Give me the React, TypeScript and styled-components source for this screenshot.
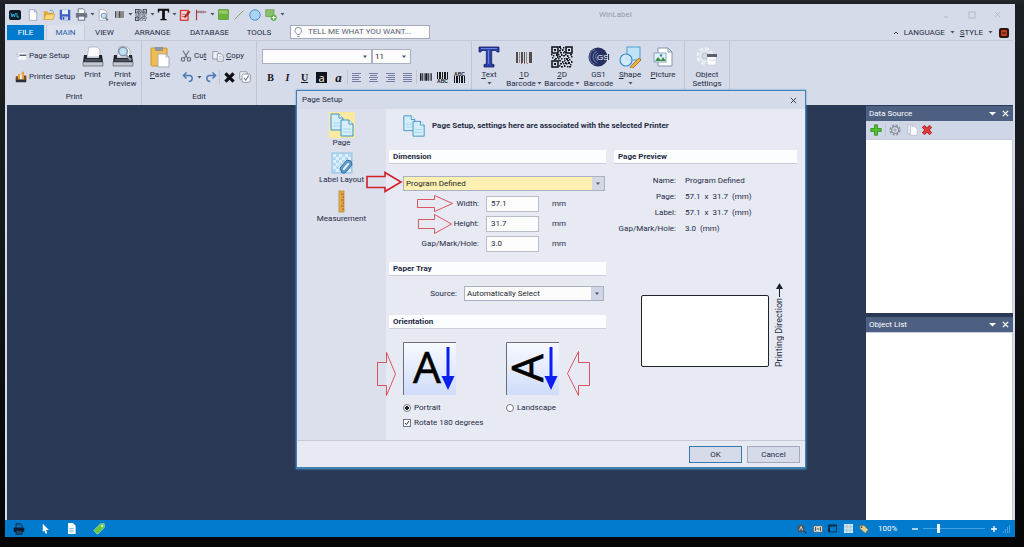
import React from "react";
import styled, { createGlobalStyle, css } from "styled-components";

const GlobalStyle = createGlobalStyle`
  *, *::before, *::after { box-sizing: border-box; }
  body { margin: 0; background: #0d0f12; }
  button, input, select { font: inherit; color: inherit; margin: 0; }
`;

const uiFont = 'Roboto, "Open Sans", sans-serif';
const displayFont = '"Open Sans", "Noto Sans", sans-serif';

/* ---------- window frame ---------- */

const Desktop = styled.div`
  min-height: 100vh;
  display: flex;
  padding: 4px 9px 10px 5px;
  background: linear-gradient(180deg, #24262c 0, #1c1f23 6px, #15191c 40%, #0b0b0c 75%, #050505 100%);
  font-family: ${uiFont};
  font-size: 8px;
  line-height: 10px;
  color: #1f2b45;
`;

const AppWindow = styled.div`
  position: relative;
  flex: 1;
  display: flex;
  flex-direction: column;
  min-width: 0;
  background: #d6dbe9;
`;

const TitleBar = styled.header`
  display: flex;
  align-items: center;
  height: 21px;
  padding: 0 6px 0 0;
`;

const QuickAccess = styled.div`
  display: flex;
  align-items: center;
  width: 576px;
`;

const AppTitle = styled.div`
  flex: 1;
  padding-left: 18px;
  color: #949aab;
`;

const WindowControls = styled.div`
  display: flex;
  color: #b3b8c6;
`;

const IconButton = styled.button<{ $w?: number; $h?: number; $on?: boolean }>`
  display: flex;
  align-items: center;
  justify-content: center;
  flex: none;
  width: ${(p) => p.$w ?? 16}px;
  height: ${(p) => p.$h ?? 16}px;
  padding: 0;
  border: 0;
  background: none;
`;

/* ---------- ribbon tabs ---------- */

const TabBar = styled.nav`
  display: flex;
  align-items: stretch;
  height: 15px;
  padding: 0 5px 0 2px;
`;

const Tab = styled.button<{ $w: number; $kind?: "file" | "active" }>`
  width: ${(p) => p.$w}px;
  padding: 0 0 1px;
  border: 1px solid transparent;
  border-width: 0 1px;
  background: none;
  line-height: 13px;
  ${(p) => p.$kind === "file" && css`
    background: #007acc;
    color: #fff;
    border-color: #007acc;
    margin-right: 2px;
  `}
  ${(p) => p.$kind === "active" && css`
    background: #dce1ee;
    color: #2a5fa5;
    border-color: #c4cbdd;
  `}
`;

const SearchBox = styled.label`
  display: flex;
  align-items: center;
  gap: 5px;
  width: 140px;
  height: 14px;
  margin-left: 10px;
  padding-left: 3px;
  border: 1px solid #a3a9b8;
  background: #fcfcfd;
  input {
    flex: 1;
    min-width: 0;
    padding: 0;
    border: 0;
    outline: 0;
    background: none;
  }
  input::placeholder { color: #5b6170; opacity: 1; }
`;

const TabBarEnd = styled.div`
  display: flex;
  align-items: center;
  gap: 5px;
  margin-left: auto;
`;

const MenuButton = styled.button`
  display: flex;
  align-items: center;
  gap: 5px;
  padding: 0;
  border: 0;
  background: none;
`;

/* ---------- ribbon ---------- */

const Ribbon = styled.section`
  display: flex;
  height: 65px;
  margin: 0 2px;
  border-top: 1px solid #c3c9da;
`;

const Group = styled.div<{ $w: number }>`
  display: flex;
  flex-direction: column;
  justify-content: space-between;
  width: ${(p) => p.$w}px;
  padding: 5px 0 3px;
  border-right: 1px solid #c0c6d8;
`;

const GroupRow = styled.div`
  display: flex;
`;

const GroupLabel = styled.div`
  text-align: center;
`;

const Stack = styled.div<{ $w: number; $pad?: number }>`
  display: flex;
  flex-direction: column;
  gap: 5px;
  width: ${(p) => p.$w}px;
  padding-left: ${(p) => p.$pad ?? 0}px;
  padding-top: 2px;
`;

const StackRow = styled.div`
  display: flex;
  align-items: center;
  height: 16px;
`;

const SmallButton = styled.button<{ $w?: number }>`
  display: flex;
  align-items: center;
  gap: 2px;
  width: ${(p) => (p.$w ? p.$w + "px" : "auto")};
  height: 16px;
  padding: 0;
  border: 0;
  background: none;
  white-space: nowrap;
`;

const BigButton = styled.button<{ $w: number }>`
  display: flex;
  flex-direction: column;
  align-items: center;
  width: ${(p) => p.$w}px;
  padding: 0;
  border: 0;
  background: none;
  line-height: 9px;
  white-space: nowrap;
  svg { flex: none; }
`;

const BigLabel = styled.span`
  display: flex;
  align-items: center;
  gap: 1px;
  margin-top: 2px;
  & + & { margin-top: 0; }
`;

const BigCaret = styled.span`
  display: flex;
  height: 9px;
  align-items: center;
`;

const Divider = styled.span`
  flex: none;
  width: 1px;
  height: 14px;
  background: #c0c6d8;
`;

const SelectFrame = styled.span<{ $w: number; $tone?: "ribbon" | "gold" | "plain" }>`
  display: flex;
  position: relative;
  width: ${(p) => p.$w}px;
  height: 15px;
  border: 1px solid #a9b0c4;
  background: ${(p) => (p.$tone === "gold" ? "#fdf0b0" : "#fcfcfd")};
  select {
    flex: 1;
    min-width: 0;
    appearance: none;
    padding: 0 14px 0 2px;
    border: 0;
    outline: 0;
    background: none;
    line-height: 13px;
    color: #1a1f2c;
  }
  svg {
    position: absolute;
    right: 0;
    top: 0;
    width: 12px;
    height: 13px;
    pointer-events: none;
    background: ${(p) => (p.$tone === "plain" ? "#cfd5e4" : p.$tone === "gold" ? "#d3d8e3" : "none")};
  }
`;

/* ---------- workspace and side panes ---------- */

const Workspace = styled.main`
  flex: 1;
  display: flex;
  justify-content: flex-end;
  margin: 0 2px;
  padding-top: 1px;
  background: #293955;
`;

const PaneColumn = styled.aside`
  display: flex;
  flex-direction: column;
  gap: 4px;
  width: 147px;
`;

const Pane = styled.section<{ $grow: number }>`
  flex: ${(p) => p.$grow} 1 0;
  display: flex;
  flex-direction: column;
`;

const PaneHeader = styled.header`
  display: flex;
  align-items: center;
  height: 15px;
  padding: 0 2px 0 3px;
  background: #4d6082;
  color: #fff;
  span { flex: 1; }
`;

const PaneTools = styled.div`
  display: flex;
  align-items: center;
  height: 18px;
  background: #cfd6e5;
`;

const PaneBody = styled.div`
  flex: 1;
  border: 1px solid #c8cddb;
  border-width: 1px 1px 0 0;
  background: #fff;
`;

/* ---------- status bar ---------- */

const StatusBar = styled.footer`
  display: flex;
  align-items: center;
  height: 17px;
  padding: 0 4px 0 0;
  background: #007acc;
  color: #fff;
`;

const StatusEnd = styled.div`
  display: flex;
  align-items: center;
  margin-left: auto;
`;

const ZoomValue = styled.span`
  width: 36px;
  padding-left: 7px;
`;

const ZoomSlider = styled.input`
  appearance: none;
  width: 62px;
  height: 10px;
  background: linear-gradient(#4aa3e0, #4aa3e0) center / 100% 1px no-repeat;
  &::-webkit-slider-thumb {
    appearance: none;
    width: 3px;
    height: 9px;
    background: #eaf2fa;
  }
`;

/* ---------- dialog ---------- */

const Dialog = styled.div`
  position: absolute;
  left: 291px;
  top: 86px;
  width: 510px;
  border: 1px solid #3f80b4;
  border-width: 1px 1px 2px;
  background: #e7e9f3;
  box-shadow: 0 0 2px #5b9bcd;
`;

const DialogTitle = styled.header`
  display: flex;
  align-items: center;
  justify-content: space-between;
  height: 18px;
  padding: 0 4px 0 5px;
  background: #d6dbe9;
`;

const DialogMain = styled.div`
  display: flex;
  height: 332px;
  border-bottom: 1px solid #c6cad6;
`;

const Sidebar = styled.nav`
  flex: none;
  display: flex;
  flex-direction: column;
  align-items: center;
  width: 89px;
  padding-top: 3px;
  background: #dce0ec;
`;

const SideItem = styled.button<{ $on?: boolean }>`
  display: flex;
  flex-direction: column;
  align-items: center;
  width: 100%;
  height: 39px;
  padding: 0;
  border: 0;
  background: none;
  svg { background: ${(p) => (p.$on ? "#faeaa0" : "none")}; }
`;

const Content = styled.div`
  flex: 1;
  display: flex;
  flex-direction: column;
  padding: 4px 8px 0 3px;
`;

const Heading = styled.h1`
  display: flex;
  align-items: center;
  gap: 6px;
  height: 37px;
  margin: 0;
  padding: 0 0 11px 13px;
  font-size: 8px;
  font-weight: 700;
`;

const Columns = styled.div`
  display: grid;
  grid-template-columns: 217px 1fr;
  gap: 8px;
`;

const Section = styled.section`
  display: flex;
  flex-direction: column;
`;

const SectionTitle = styled.h2`
  height: 14px;
  margin: 0;
  padding-left: 4px;
  border-bottom: 1px solid #c9cdd9;
  background: #fcfdfe;
  font-size: 8px;
  line-height: 14px;
  font-weight: 700;
`;

const Fields = styled.div<{ $h: number; $top?: number }>`
  display: flex;
  flex-direction: column;
  height: ${(p) => p.$h}px;
  padding: ${(p) => p.$top ?? 12}px 1px 0 14px;
`;

const Field = styled.label<{ $label: number }>`
  display: grid;
  grid-template-columns: ${(p) => p.$label}px auto 1fr;
  align-items: center;
  column-gap: 7px;
  > span:first-child { text-align: right; }
`;

const FieldList = styled.div`
  display: flex;
  flex-direction: column;
  gap: 4px;
  margin-top: 5px;
`;

const NumberBox = styled.input`
  width: 53px;
  height: 16px;
  padding: 0 4px 1px;
  border: 1px solid #b7bccb;
  outline: 0;
  background: #fdfdfe;
`;

const Unit = styled.span`
  padding-left: 6px;
`;

const Orientations = styled.div`
  display: grid;
  grid-template-columns: 103px 103px;
  margin-top: 1px;
`;

const Option = styled.label`
  display: flex;
  flex-direction: column;
  gap: 8px;
  svg { overflow: visible; }
`;

const Choice = styled.span`
  display: flex;
  align-items: center;
  gap: 3px;
`;

const Radio = styled.input`
  appearance: none;
  width: 8px;
  height: 8px;
  border: 1px solid #6f7789;
  border-radius: 50%;
  background: #fff;
  &:checked { background: radial-gradient(circle, #222 0 2px, #fff 2px); }
`;

const CheckLine = styled.label`
  display: flex;
  align-items: center;
  gap: 3px;
  margin-top: 5px;
`;

const CheckBox = styled.input`
  appearance: none;
  width: 8px;
  height: 8px;
  border: 1px solid #6f7789;
  background: #fff;
  &:checked {
    background: #fff url("data:image/svg+xml,%3Csvg xmlns='http://www.w3.org/2000/svg' viewBox='0 0 6 6'%3E%3Cpath d='M1 3l1.5 1.7L5 1' fill='none' stroke='%23333'/%3E%3C/svg%3E");
  }
`;

const Summary = styled.dl`
  display: grid;
  grid-template-columns: 62px 1fr;
  gap: 6px 9px;
  height: 119px;
  align-content: start;
  margin: 0;
  padding-top: 12px;
  dt { text-align: right; }
  dd { margin: 0; white-space: pre; }
`;

const PreviewRow = styled.div`
  display: flex;
  align-items: flex-end;
  gap: 5px;
  padding-left: 27px;
`;

const Sheet = styled.div`
  width: 128px;
  height: 72px;
  border: 1px solid #20222a;
  border-radius: 2px;
  background: #fff;
`;

const PrintDirection = styled.div`
  display: flex;
  flex-direction: column;
  align-items: center;
  span {
    writing-mode: vertical-rl;
    transform: rotate(180deg);
    font-size: 9px;
    line-height: 11px;
  }
`;

const DialogFooter = styled.footer`
  display: flex;
  justify-content: flex-end;
  gap: 5px;
  padding: 5px 5px 4px;
`;

const PushButton = styled.button<{ $primary?: boolean }>`
  width: 53px;
  height: 17px;
  padding: 0;
  border: 1px solid ${(p) => (p.$primary ? "#3a78b0" : "#a3a9ba")};
  background: #d6dbe9;
`;

const Callouts = styled.svg`
  position: absolute;
  left: 0;
  top: 0;
  width: 100%;
  height: 100%;
  pointer-events: none;
`;

/* ---------- icons ---------- */

type IconProps = { s?: number; box?: number; children: React.ReactNode };
const Svg = ({ s = 12, box = 16, children }: IconProps) => (
  <svg width={s} height={s} viewBox={`0 0 ${box} ${box}`} fill="none" aria-hidden="true">{children}</svg>
);

const Caret = ({ c = "#4a5266" }: { c?: string }) => (
  <svg width="5" height="3" viewBox="0 0 5 3" aria-hidden="true"><path d="M.5 0h4L2.500 2.500z" fill={c} /></svg>
);

const DropArrow = () => (
  <svg viewBox="0 0 12 12" aria-hidden="true"><path d="M4 5h4L6 7.500z" fill="#4a5266" /></svg>
);

const Logo = () => (
  <Svg s={12} box={12}>
    <rect x="0" y="1" width="12" height="10" rx="2" fill="#0b1a22" />
    <path d="M2 4l1 4 1.200-3L5.500 8l1-4M8 4v4h2" stroke="#27b3e6" />
  </Svg>
);

const NewDoc = () => (
  <Svg><path d="M3 1h7l3 3v11H3z" fill="#fff" stroke="#8c9bb8" /><path d="M10 1v3h3" stroke="#8c9bb8" /></Svg>
);

const Folder = () => (
  <Svg>
    <path d="M1 3h5l1 2h7v9H1z" fill="#e0a93a" />
    <path d="M4 7h12l-3 7H1z" fill="#fbd87a" stroke="#c58d28" strokeWidth=".7" />
    <path d="M9 2c3-1 5 0 5 3" stroke="#4a84d0" />
  </Svg>
);

const Save = () => (
  <Svg>
    <path d="M1 1h14v14H3l-2-2z" fill="#3d5fc4" />
    <rect x="4" y="1" width="8" height="6" fill="#e9eefb" />
    <rect x="4" y="10" width="8" height="5" fill="#c8d2ee" />
    <rect x="5" y="11" width="2" height="3" fill="#2a3f92" />
  </Svg>
);

const Printer = ({ s = 13, dark }: { s?: number; dark?: boolean }) => (
  <Svg s={s}>
    <path d="M4 6V1h6l2 2v3" fill={dark ? "#0a6cb5" : "#fff"} stroke={dark ? "#0c1c2c" : "#555e70"} />
    <rect x="1" y="6" width="14" height="6" rx="1" fill={dark ? "#0c1c2c" : "#707888"} />
    <rect x="4" y="10" width="8" height="5" fill={dark ? "#1c4a70" : "#eef0f6"} stroke={dark ? "#0c1c2c" : "#555e70"} />
  </Svg>
);

const PreviewIcon = () => (
  <Svg>
    <path d="M3 1h7l3 3v11H3z" fill="#fff" stroke="#9aa3b6" />
    <circle cx="9" cy="9" r="3.500" fill="#cfe2f4" stroke="#5e6f8c" />
    <path d="M11.500 12l3 3" stroke="#5e6f8c" strokeWidth="2" />
  </Svg>
);

const bars = [[0, 2], [3, 1], [5, 1], [7, 3], [11, 1], [13, 1], [15, 1]];
const Bars = ({ s = 11, c = "#4c4a48", h = 12 }: { s?: number; c?: string; h?: number }) => (
  <Svg s={s}>{bars.map(([x, w]) => <rect key={x} x={x} y={(16 - h) / 2} width={w} height={h} fill={c} />)}</Svg>
);

/* Three finder squares on an 11-unit grid with scattered data cells between them. */
const qrCells = [
  [8, 0], [9, 2], [12, 1], [8, 4], [11, 3], [13, 5], [9, 6], [12, 6], [10, 8], [12, 9],
  [0, 8], [2, 9], [5, 8], [7, 8], [1, 11], [4, 12], [6, 10], [3, 13], [8, 10], [14, 8], [16, 9], [19, 8], [17, 11], [20, 10],
  [15, 12], [13, 12], [10, 12], [8, 14], [11, 15], [13, 14], [16, 14], [18, 13], [20, 15], [9, 17], [12, 17], [15, 17],
  [17, 16], [19, 18], [8, 19], [10, 20], [13, 19], [16, 20], [18, 20], [7, 12], [14, 16],
];
const QrCode = ({ s = 21, c = "#15181f" }: { s?: number; c?: string }) => (
  <svg width={s} height={s} viewBox="0 0 22 22" fill="none" aria-hidden="true">
    {[[0, 0], [14, 0], [0, 14]].map(([x, y]) => (
      <g key={x + "-" + y} transform={`translate(${x} ${y})`}>
        <rect x="1" y="1" width="6" height="6" stroke={c} strokeWidth="1.600" />
        <rect x="3" y="3" width="2" height="2" fill={c} />
      </g>
    ))}
    {qrCells.map(([x, y], i) => <rect key={i} x={x} y={y} width={i % 3 === 0 ? 2 : 1.500} height={i % 4 === 0 ? 2 : 1.500} fill={c} />)}
  </svg>
);

const BigT = ({ s = 13, c = "#111" }: { s?: number; c?: string }) => (
  <Svg s={s}>
    <path d="M1 1h14v4.500h-1.500L13 3.300H9.700v9.900l2.300.5V15H4v-1.300l2.300-.5V3.300H3L2.500 5.500H1z" fill={c} />
  </Svg>
);

const RedNote = () => (
  <Svg>
    <rect x="2" y="2" width="10" height="13" fill="#f6dada" stroke="#d83a3a" strokeWidth="1.800" />
    <path d="M4 7h5M4 10h3" stroke="#c43a3a" />
    <path d="M6 11l7-9 2.500 2-7 8z" fill="#b02222" />
  </Svg>
);

const Ruler = () => (
  <Svg><path d="M2 1v14M2 4h13" stroke="#9c3a3a" strokeWidth="1.500" /><path d="M5 2v4M8 2v4M11 2v4" stroke="#7c8499" /></Svg>
);

const GreenBox = () => (
  <Svg s={11}><rect x="1" y="1" width="14" height="14" fill="#6db33a" stroke="#4b8a24" /><rect x="2" y="2" width="12" height="5" fill="#93cc62" /></Svg>
);

const LineIcon = () => <Svg><path d="M2 14L14 2" stroke="#7ea35a" strokeWidth="1.300" /></Svg>;
const CircleIcon = () => <Svg><circle cx="8" cy="8" r="7" fill="#a9d3f5" stroke="#4a8fce" strokeWidth="1.300" /></Svg>;
const AddShape = () => (
  <Svg>
    <rect x="1" y="1" width="11" height="9" fill="#8cbf6a" stroke="#6b9a4c" />
    <circle cx="11.500" cy="11.500" r="4" fill="#4caf32" /><path d="M11.500 9v5M9 11.500h5" stroke="#fff" strokeWidth="1.500" />
  </Svg>
);

const Bulb = () => (
  <svg width="9" height="11" viewBox="0 0 9 11" fill="none" aria-hidden="true">
    <path d="M3 7.500C2.500 6 1 5.500 1 3.700a3.300 3.300 0 0 1 6.600 0C7.600 5.500 6 6 5.600 7.500z" stroke="#8a91a0" />
    <path d="M3.200 9.500h2.300" stroke="#8a91a0" />
  </svg>
);

const PageSetupIcon = () => (
  <Svg s={12}><rect x="4" y="4" width="11" height="9" fill="#f6f7fb" /><path d="M6 7h9" stroke="#4a5266" strokeWidth="1.800" /><path d="M1 5l4 1M3 9l3-1" stroke="#aab0c0" /></Svg>
);

const PrinterSetupIcon = () => (
  <Svg s={12}>
    <rect x="1" y="11" width="14" height="4" fill="#2c2e38" /><path d="M4 11V4h3v7zM9 11V1h3v10z" fill="#e7a33a" />
    <path d="M1 7h3v5H1zM12 6h3v6h-3z" fill="#7a4c1c" /><path d="M7 5h2v6H7z" fill="#f6f2e4" />
  </Svg>
);

const LargePrinter = ({ lens }: { lens?: boolean }) => (
  <Svg s={22} box={22}>
    <path d="M5 11L7 1h8l3 3v7z" fill="#fbfbfd" stroke="#a0a5b2" strokeWidth=".7" />
    <path d="M2 9h3v3h12V9h3l1 7H1z" fill="#23262e" />
    <path d="M1 16h20v4H1z" fill="#c3c7d1" stroke="#5c606c" strokeWidth=".7" />
    <path d="M3 14h16" stroke="#737885" />
    {lens && <><circle cx="11" cy="5.500" r="4.300" fill="#c4def4" stroke="#7e93ac" strokeWidth="1.400" /><path d="M14 9l5 5" stroke="#8e99aa" strokeWidth="2.200" /></>}
  </Svg>
);

const PasteIcon = () => (
  <Svg s={22} box={22}>
    <rect x="2" y="2" width="16" height="18" rx="1" fill="#f2bd4e" stroke="#c99334" />
    <path d="M6 1h8v4H6z" fill="#8f949e" />
    <path d="M9 8h8l3 3v10H9z" fill="#fff" stroke="#a7adba" /><path d="M17 8v3h3" stroke="#a7adba" />
  </Svg>
);

const CutIcon = () => (
  <Svg><path d="M4 1l6 10M12 1L6 11" stroke="#66707f" strokeWidth="1.500" /><circle cx="4" cy="12.500" r="2.300" stroke="#66707f" strokeWidth="1.500" /><circle cx="12" cy="12.500" r="2.300" stroke="#66707f" strokeWidth="1.500" /></Svg>
);

const CopyIcon = () => (
  <Svg><path d="M1 2h6l2 2v8H1z" fill="#eceff6" stroke="#7d8698" /><path d="M7 5h5l3 3v7H7z" fill="#f7f8fb" stroke="#7d8698" /><path d="M9 9h4M9 12h4" stroke="#9aa3b5" /></Svg>
);

const UndoIcon = ({ flip }: { flip?: boolean }) => (
  <Svg>
    <g transform={flip ? "matrix(-1 0 0 1 16 0)" : undefined}>
      <path d="M2 6h8c5 0 5 8-1 8" stroke="#4a78b8" strokeWidth="2" /><path d="M6 2L2 6l4 4" stroke="#4a78b8" strokeWidth="2" />
    </g>
  </Svg>
);

const DeleteIcon = () => <Svg s={13}><path d="M3 3l10 10M13 3L3 13" stroke="#0d0f14" strokeWidth="4" /></Svg>;
const SelectAllIcon = () => (
  <Svg><rect x="1" y="1" width="10" height="10" rx="1" fill="#f3f5f9" stroke="#7d8698" /><rect x="4" y="4" width="11" height="11" rx="2" fill="#fff" stroke="#6c7588" /><path d="M6.500 9l2.500 3 4-6" stroke="#6c7588" strokeWidth="1.500" /></Svg>
);

const AlignIcon = ({ kind }: { kind: "left" | "center" | "right" | "fill" }) => (
  <Svg s={11} box={11}>
    {[1, 3, 5, 7, 9].map((y, i) => {
      const w = kind === "fill" ? 9 : i % 2 ? 7 : 9;
      const x = kind === "left" || kind === "fill" ? 1 : kind === "right" ? 10 - w : 2 - (i % 2 ? 0 : 1);
      return <rect key={y} x={x} y={y} width={w} height="1" fill="#767da3" />;
    })}
  </Svg>
);

const Glyph = styled.span<{ $look?: "italic" | "underline" | "reverse" | "script" }>`
  display: block;
  min-width: 11px;
  font-family: "Liberation Serif", serif;
  font-weight: 700;
  font-size: 10px;
  line-height: 11px;
  text-align: center;
  color: #10131a;
  ${(p) => p.$look === "italic" && "font-style: italic;"}
  ${(p) => p.$look === "underline" && "text-decoration: underline;"}
  ${(p) => p.$look === "script" && "font-style: italic; font-size: 13px;"}
  ${(p) => p.$look === "reverse" && `background: #10131a; color: #fff; font-family: ${displayFont}; font-size: 11px; font-weight: 400;`}
`;

const BarsText = ({ at }: { at: "top" | "bottom" }) => (
  <svg width="13" height="13" viewBox="0 0 13 13" aria-hidden="true">
    {[[1, 1], [3, 2], [6, 1], [8, 2], [11, 1]].map(([x, w]) => <rect key={x} x={x} y={at === "top" ? 5 : 1} width={w} height="7" fill="#14171d" />)}
    <text x="6.500" y={at === "top" ? 5 : 12} textAnchor="middle" fontSize="5" fontWeight="700" fontFamily="Liberation Sans, sans-serif" fill="#14171d">ABC</text>
  </svg>
);

const TextBlue = () => (
  <Svg s={22} box={22}>
    <path d="M1 1h20v5h-2l-.8-1.500h-4.500v13.500l2.300.6V21H6v-2.400l2.300-.6V4.500H3.800L3 6H1z" fill="#2b3fa6" stroke="#141f66" strokeWidth=".8" />
    <path d="M3 2.500h16M10.500 4v14" stroke="#6a83dc" strokeWidth="1.200" />
  </Svg>
);

const BarsLarge = () => (
  <Svg s={22} box={22}>
    {[[3, 2], [6, 1], [8, 2], [11, 1], [13, 1], [16, 3]].map(([x, w]) => <rect key={x} x={x} y="6" width={w} height="11" fill={x === 6 || x === 13 ? "#8f8884" : "#514b4a"} />)}
    <path d="M8 17.500h9" stroke="#b06a4c" strokeDasharray="1 2" />
  </Svg>
);

const Gs1Icon = () => (
  <Svg s={22} box={22}>
    <circle cx="10" cy="11" r="9.500" fill="#26315f" />
    <path d="M9 5a6.500 6.500 0 0 0 0 12M7 3.500a8 8 0 0 0 0 15M10 7a4.500 4.500 0 0 0 0 8" stroke="#8390bd" strokeWidth=".8" />
    <text x="9" y="14" fontSize="8" fontFamily="Liberation Sans, sans-serif" fill="#fff">GS</text>
    <path d="M20.500 8v6" stroke="#26315f" strokeWidth="1.200" />
  </Svg>
);

const ShapeIcon = () => (
  <Svg s={22} box={22}>
    <rect x="8" y="1" width="13" height="13" fill="#bfe2f6" stroke="#4d9ed0" />
    <circle cx="7" cy="14" r="6" fill="#d3ecfa" fillOpacity=".8" stroke="#3c93c9" strokeWidth="1.200" />
    <path d="M12 20l8-8 2 2-8 8-3 .5z" fill="#f4b13e" stroke="#8a5a1c" strokeWidth=".7" />
  </Svg>
);

const PictureIcon = () => (
  <Svg s={22} box={22}>
    <path d="M6 2h10l4 4v14H6z" fill="#fff" stroke="#7f96ae" /><path d="M16 2v4h4" stroke="#7f96ae" />
    <rect x="2" y="7" width="12" height="9" fill="#e7f3fb" stroke="#88a6bf" />
    <path d="M3 15l3-4 3 3 2-3 3 4z" fill="#3f8f46" /><circle cx="9" cy="9.500" r="1.300" fill="#3c86b8" />
  </Svg>
);

const ObjectSettingsIcon = () => (
  <Svg s={22} box={22}>
    <circle cx="9" cy="10" r="7" stroke="#eceff5" strokeWidth="3.500" strokeDasharray="3.500 2" />
    <circle cx="9" cy="10" r="5" stroke="#e3e6ee" strokeWidth="3" />
    <circle cx="9" cy="10" r="3" stroke="#bcc3d0" strokeWidth="1" />
    <rect x="11" y="9" width="9" height="10" fill="#fdfdfe" stroke="#c5cad6" strokeWidth=".7" /><rect x="11" y="8" width="10" height="3" fill="#5a6070" />
    <path d="M13 14h6" stroke="#d0d4de" />
  </Svg>
);

const PagesIcon = ({ s = 26 }: { s?: number }) => (
  <Svg s={s} box={26}>
    {[[2, 2], [12, 8]].map(([x, y]) => (
      <g key={x} transform={`translate(${x} ${y})`}>
        <path d="M0 0h8l4 4v12H0z" fill="#d5eefa" stroke="#3f93c4" />
        <path d="M8 0v4h4" fill="#fff" stroke="#3f93c4" /><path d="M2 12h8M2 9h8" stroke="#a6d6ee" />
      </g>
    ))}
  </Svg>
);

const LabelLayoutIcon = () => (
  <Svg s={24} box={24}>
    <rect x="2" y="2" width="20" height="20" fill="#b4daf3" stroke="#8fc3e6" />
    {[0, 1, 2, 3, 4, 5].map((r) => [0, 1, 2].map((c) => (
      <rect key={r + "-" + c} x={3 + c * 6 + (r % 2) * 3} y={3 + r * 3} width="3" height="3" fill="#dceffa" />
    )))}
    <path d="M10 17l7-8 4 1 1 4-7 8h-3z" fill="#5c9fd0" stroke="#3c6f9a" /><path d="M12 18l6-7 2 2-6 7z" fill="#e5f2fa" stroke="#3c6f9a" strokeWidth=".6" />
  </Svg>
);

const MeasureIcon = () => (
  <Svg s={24} box={24}>
    <rect x="9" y="1" width="5" height="21" fill="#e4a84c" stroke="#c08a34" strokeWidth=".8" />
    <path d="M11 4h3M12 7h2M11 10h3M12 13h2M11 16h3M12 19h2" stroke="#8a5a1c" strokeWidth=".8" />
  </Svg>
);

const CloseIcon = ({ s = 8, c = "currentColor", w = 1.2 }: { s?: number; c?: string; w?: number }) => (
  <Svg s={s} box={8}><path d="M1 1l6 6M7 1L1 7" stroke={c} strokeWidth={w} /></Svg>
);

const OrientationIcon = ({ landscape }: { landscape?: boolean }) => (
  <svg width="53" height="53" viewBox="0 0 53 53" aria-hidden="true">
    <defs>
      <linearGradient id="tile" x1="0" y1="0" x2="0" y2="1"><stop offset="0" stopColor="#f8faff" /><stop offset="1" stopColor="#cfdcfb" /></linearGradient>
    </defs>
    <rect width="53" height="53" fill="url(#tile)" />
    <path d="M.500 53V.500H53" stroke="#6b6e78" fill="none" />
    <text
      textAnchor="middle" fontSize="44" fontFamily="Open Sans, sans-serif" fill="#000" stroke="#000" strokeWidth=".600"
      transform={landscape ? "translate(37 26) rotate(-90)" : "translate(24 41)"}
    >A</text>
    <path d="M45 5v32" stroke="#0b1ff0" strokeWidth="3" /><path d="M38.500 34h13L45 48z" fill="#0b1ff0" />
  </svg>
);

const DirectionArrow = () => (
  <svg width="9" height="15" viewBox="0 0 9 15" aria-hidden="true"><path d="M1 6h7L4.500 0z" fill="#1c2233" /><path d="M4.500 5v9" stroke="#1c2233" /></svg>
);

/* ---------- app ---------- */

const quickItems: [string, React.ReactNode][] = [
  ["New", <NewDoc />], ["Open", <Folder />], ["Save", <Save />], ["Print", <Printer />], ["", null],
  ["Preview", <PreviewIcon />], ["1D Barcode", <Bars s={9} />], ["", null], ["2D Barcode", <QrCode s={12} c="#3a3f4c" />], ["", null],
  ["Text", <BigT />], ["", null], ["Note", <RedNote />], ["Ruler", <Ruler />], ["", null],
  ["Rectangle", <GreenBox />], ["Line", <LineIcon />], ["Ellipse", <CircleIcon />], ["Add shape", <AddShape />], ["", null],
];

const MarkLabel = ({ text, caret }: { text: string; caret?: boolean }) => (
  <BigLabel><span>{text}</span>{caret && <Caret />}</BigLabel>
);

export default function App() {
  return (
    <>
      <GlobalStyle />
      <Desktop>
        <AppWindow>
          <TitleBar>
            <QuickAccess>
              <IconButton $w={20} aria-label="Application"><Logo /></IconButton>
              {quickItems.map(([name, icon], i) => (
                <IconButton key={i} $w={icon ? 16 : 6} aria-label={name || "More"}>{icon ?? <Caret />}</IconButton>
              ))}
            </QuickAccess>
            <AppTitle>WinLabel</AppTitle>
            <WindowControls>
              <IconButton $w={26} aria-label="Minimize"><Svg s={8} box={8}><path d="M2 6h4" stroke="currentColor" /></Svg></IconButton>
              <IconButton $w={26} aria-label="Maximize"><Svg s={8} box={8}><rect x="1" y="1" width="6" height="6" stroke="currentColor" /></Svg></IconButton>
              <IconButton $w={24} aria-label="Close"><CloseIcon s={7} w={1} /></IconButton>
            </WindowControls>
          </TitleBar>

          <TabBar>
            <Tab $w={37} $kind="file">FILE</Tab>
            <Tab $w={39} $kind="active">MAIN</Tab>
            <Tab $w={39}>VIEW</Tab>
            <Tab $w={57}>ARRANGE</Tab>
            <Tab $w={57}>DATABASE</Tab>
            <Tab $w={42}>TOOLS</Tab>
            <SearchBox>
              <Bulb />
              <input aria-label="Search" placeholder="TELL ME WHAT YOU WANT..." />
            </SearchBox>
            <TabBarEnd>
              <IconButton $w={6} $h={12} aria-label="Collapse ribbon"><Svg s={6} box={6}><path d="M1 4l2-2 2 2" stroke="#39435c" /></Svg></IconButton>
              <MenuButton>LANGUAGE<Caret /></MenuButton>
              <MenuButton><span><u>S</u>TYLE</span><Caret /></MenuButton>
              <IconButton $w={12} $h={12} aria-label="About">
                <Svg s={10} box={10}><rect width="10" height="10" rx="2" fill="#2b1410" /><rect x="2" y="2" width="6" height="6" rx="1" fill="#c2401c" /><path d="M3 5h4" stroke="#2b1410" /></Svg>
              </IconButton>
            </TabBarEnd>
          </TabBar>

          <Ribbon>
            <Group $w={135}>
              <GroupRow>
                <Stack $w={70} $pad={8}>
                  <SmallButton><PageSetupIcon />Page Setup</SmallButton>
                  <SmallButton><PrinterSetupIcon />Printer Setup</SmallButton>
                </Stack>
                <BigButton $w={31}><LargePrinter /><MarkLabel text="Print" /></BigButton>
                <BigButton $w={29}><LargePrinter lens /><MarkLabel text="Print" /><MarkLabel text="Preview" /></BigButton>
              </GroupRow>
              <GroupLabel>Print</GroupLabel>
            </Group>

            <Group $w={115}>
              <GroupRow>
                <BigButton $w={36}><PasteIcon /><BigLabel><span><u>P</u>aste</span></BigLabel></BigButton>
                <Stack $w={76} $pad={2}>
                  <StackRow>
                    <SmallButton $w={32}><CutIcon /><span>Cu<u>t</u></span></SmallButton>
                    <SmallButton><CopyIcon /><span><u>C</u>opy</span></SmallButton>
                  </StackRow>
                  <StackRow>
                    <IconButton aria-label="Undo"><UndoIcon /></IconButton>
                    <IconButton $w={7} aria-label="Undo history"><Caret /></IconButton>
                    <IconButton aria-label="Redo"><UndoIcon flip /></IconButton>
                    <Divider />
                    <IconButton $w={18} aria-label="Delete"><DeleteIcon /></IconButton>
                    <IconButton $w={14} aria-label="Select all"><SelectAllIcon /></IconButton>
                  </StackRow>
                </Stack>
              </GroupRow>
              <GroupLabel>Edit</GroupLabel>
            </Group>

            <Group $w={215}>
              <Stack $w={206} $pad={5}>
                <StackRow>
                  <SelectFrame $w={110} $tone="ribbon"><select aria-label="Font" defaultValue=""><option></option></select><DropArrow /></SelectFrame>
                  <SelectFrame $w={39} $tone="ribbon"><select aria-label="Font size"><option>11</option></select><DropArrow /></SelectFrame>
                </StackRow>
                <StackRow>
                  <IconButton $w={17} aria-label="Bold"><Glyph>B</Glyph></IconButton>
                  <IconButton $w={17} aria-label="Italic"><Glyph $look="italic">I</Glyph></IconButton>
                  <IconButton $w={17} aria-label="Underline"><Glyph $look="underline">U</Glyph></IconButton>
                  <IconButton $w={17} aria-label="Inverse"><Glyph $look="reverse">a</Glyph></IconButton>
                  <IconButton $w={17} aria-label="Font style"><Glyph $look="script">a</Glyph></IconButton>
                  <Divider />
                  <IconButton $w={17} aria-label="Align left"><AlignIcon kind="left" /></IconButton>
                  <IconButton $w={17} aria-label="Align center"><AlignIcon kind="center" /></IconButton>
                  <IconButton $w={17} aria-label="Align right"><AlignIcon kind="right" /></IconButton>
                  <IconButton $w={17} aria-label="Justify"><AlignIcon kind="fill" /></IconButton>
                  <Divider />
                  <IconButton $w={17} aria-label="Barcode without text"><Bars s={12} c="#14171d" h={10} /></IconButton>
                  <IconButton $w={17} aria-label="Text below barcode"><BarsText at="bottom" /></IconButton>
                  <IconButton $w={17} aria-label="Text above barcode"><BarsText at="top" /></IconButton>
                </StackRow>
              </Stack>
            </Group>

            <Group $w={213}>
              <GroupRow>
                <BigButton $w={34}><TextBlue /><BigLabel><span><u>T</u>ext</span></BigLabel><BigCaret><Caret /></BigCaret></BigButton>
                <BigButton $w={36}><BarsLarge /><BigLabel><span><u>1</u>D</span></BigLabel><MarkLabel text="Barcode" caret /></BigButton>
                <BigButton $w={40}><QrCode s={22} /><BigLabel><span><u>2</u>D</span></BigLabel><MarkLabel text="Barcode" caret /></BigButton>
                <BigButton $w={33}><Gs1Icon /><MarkLabel text="GS1" /><MarkLabel text="Barcode" /></BigButton>
                <BigButton $w={30}><ShapeIcon /><BigLabel><span><u>S</u>hape</span></BigLabel><BigCaret><Caret /></BigCaret></BigButton>
                <BigButton $w={36}><PictureIcon /><BigLabel><span><u>P</u>icture</span></BigLabel></BigButton>
              </GroupRow>
            </Group>

            <Group $w={45}>
              <BigButton $w={44}><ObjectSettingsIcon /><MarkLabel text="Object" /><MarkLabel text="Settings" /></BigButton>
            </Group>
          </Ribbon>

          <Workspace>
            <PaneColumn>
              <Pane $grow={207}>
                <PaneHeader>
                  <span>Data Source</span>
                  <IconButton $w={13} aria-label="Data Source menu"><Svg s={7} box={7}><path d="M0 2h7L3.500 5.500z" fill="#fff" /></Svg></IconButton>
                  <IconButton $w={12} aria-label="Close Data Source"><CloseIcon s={7} w={1.500} /></IconButton>
                </PaneHeader>
                <PaneTools>
                  <IconButton $w={19} aria-label="Add"><Svg><path d="M6 1h4v5h5v4h-5v5H6v-5H1V6h5z" fill="#4fc02c" stroke="#2b8a18" /></Svg></IconButton>
                  <Divider />
                  <IconButton $w={18} aria-label="Configure">
                    <Svg><circle cx="8" cy="8" r="6" stroke="#9298a6" strokeWidth="3" strokeDasharray="3 1.700" /><circle cx="8" cy="8" r="4.500" fill="#dfe2ea" stroke="#8d93a2" strokeWidth="1.500" /><circle cx="8" cy="8" r="1.500" stroke="#7b8190" /></Svg>
                  </IconButton>
                  <IconButton aria-label="Copy"><Svg><path d="M2 1h7v12H2z" fill="#e8ebf2" stroke="#b4bac8" /><path d="M6 3h5l4 4v8H6z" fill="#fff" stroke="#b4bac8" /></Svg></IconButton>
                  <IconButton $w={14} aria-label="Delete"><Svg><path d="M3 3l10 10M13 3L3 13" stroke="#8f1c1c" strokeWidth="5" /><path d="M3 3l10 10M13 3L3 13" stroke="#df3a35" strokeWidth="3.500" /></Svg></IconButton>
                </PaneTools>
                <PaneBody />
              </Pane>
              <Pane $grow={203}>
                <PaneHeader>
                  <span>Object List</span>
                  <IconButton $w={13} aria-label="Object List menu"><Svg s={7} box={7}><path d="M0 2h7L3.500 5.500z" fill="#fff" /></Svg></IconButton>
                  <IconButton $w={12} aria-label="Close Object List"><CloseIcon s={7} w={1.500} /></IconButton>
                </PaneHeader>
                <PaneBody />
              </Pane>
            </PaneColumn>
          </Workspace>

          <StatusBar>
            <IconButton $w={27} aria-label="Printer"><Printer s={12} dark /></IconButton>
            <IconButton $w={26} aria-label="Pointer"><Svg s={11}><path d="M4 1l9 9H8.500l2 4.500-2.300 1L6.300 11 4 13z" fill="#fff" /></Svg></IconButton>
            <IconButton $w={27} aria-label="Document"><Svg s={11}><path d="M3 0h7l4 4v12H3z" fill="#fff" /><path d="M5 8h6M5 10.500h6M5 13h6" stroke="#5ba4dc" /></Svg></IconButton>
            <IconButton $w={27} aria-label="Label"><Svg s={12}><path d="M1 10L10 1h5v5l-9 9z" fill="#66c83c" stroke="#d6f2c4" strokeWidth=".8" /><circle cx="12" cy="4" r="1.300" fill="#fff" /></Svg></IconButton>
            <StatusEnd>
              <IconButton aria-label="Find"><Svg s={10}><rect x="1" y="1" width="11" height="12" rx="4" fill="#4c5561" /><path d="M4 10l2.500-6L9 10" stroke="#d5dbe2" strokeWidth="1.500" /><path d="M11 11l4 4" stroke="#30353d" strokeWidth="2" /></Svg></IconButton>
              <IconButton $w={15} aria-label="Fit"><Svg s={10}><rect x="1" y="3" width="14" height="10" fill="#dcd9ce" stroke="#565b62" /><path d="M4 5v6M12 5v6M6 8h4" stroke="#3e4248" strokeWidth="1.500" /></Svg></IconButton>
              <IconButton $w={15} aria-label="Window"><Svg s={9}><path d="M1 2h14v12H1z" stroke="#0e2b44" strokeWidth="1.500" /><path d="M1 3h14M2 2v12" stroke="#0e2b44" strokeWidth="3" /></Svg></IconButton>
              <IconButton $w={16} aria-label="Grid"><Svg s={9}><rect width="16" height="16" fill="#d5e6f3" /><path d="M5 0v16M11 0v16M0 5h16M0 11h16" stroke="#7db1d6" /></Svg></IconButton>
              <IconButton $w={15} aria-label="Tag"><Svg s={10}><path d="M1 2h7l7 7-5 6-9-8z" fill="#d9cf9c" stroke="#4c4a36" /><circle cx="4" cy="5" r="1.300" fill="#3c3a2a" /></Svg></IconButton>
              <ZoomValue>100%</ZoomValue>
              <IconButton $w={16} aria-label="Zoom out"><Svg s={6} box={6}><path d="M0 3h6" stroke="#fff" strokeWidth="1.300" /></Svg></IconButton>
              <ZoomSlider type="range" aria-label="Zoom" min={0} max={100} defaultValue={23} />
              <IconButton $w={18} aria-label="Zoom in"><Svg s={6} box={6}><path d="M0 3h6M3 0v6" stroke="#fff" strokeWidth="1.300" /></Svg></IconButton>
              <Svg s={8} box={8}><path d="M6 1h1M4 3h1M6 3h1M2 5h1M4 5h1M6 5h1M0 7h1M2 7h1M4 7h1M6 7h1" stroke="#8fc6ee" /></Svg>
            </StatusEnd>
          </StatusBar>

          <Dialog role="dialog" aria-label="Page Setup">
            <DialogTitle>
              <span>Page Setup</span>
              <IconButton aria-label="Close dialog"><CloseIcon s={7} w={1} /></IconButton>
            </DialogTitle>
            <DialogMain>
              <Sidebar>
                <SideItem $on><PagesIcon /><span>Page</span></SideItem>
                <SideItem><LabelLayoutIcon /><span>Label Layout</span></SideItem>
                <SideItem><MeasureIcon /><span>Measurement</span></SideItem>
              </Sidebar>
              <Content>
                <Heading><PagesIcon s={24} />Page Setup, settings here are associated with the selected Printer</Heading>
                <Columns>
                  <div>
                    <Section>
                      <SectionTitle>Dimension</SectionTitle>
                      <Fields $h={98}>
                        <SelectFrame $w={202} $tone="gold"><select aria-label="Page size"><option>Program Defined</option></select><DropArrow /></SelectFrame>
                        <FieldList>
                          {[["Width:", "57.1"], ["Height:", "31.7"], ["Gap/Mark/Hole:", "3.0"]].map(([name, value]) => (
                            <Field key={name} $label={76}>
                              <span>{name}</span><NumberBox defaultValue={value} /><Unit>mm</Unit>
                            </Field>
                          ))}
                        </FieldList>
                      </Fields>
                    </Section>
                    <Section>
                      <SectionTitle>Paper Tray</SectionTitle>
                      <Fields $h={39} $top={10}>
                        <Field $label={54}>
                          <span>Source:</span>
                          <SelectFrame $w={140} $tone="plain"><select><option>Automatically Select</option></select><DropArrow /></SelectFrame>
                        </Field>
                      </Fields>
                    </Section>
                    <Section>
                      <SectionTitle>Orientation</SectionTitle>
                      <Fields $h={110}>
                        <Orientations>
                          <Option><OrientationIcon /><Choice><Radio type="radio" name="orientation" defaultChecked />Portrait</Choice></Option>
                          <Option><OrientationIcon landscape /><Choice><Radio type="radio" name="orientation" />Landscape</Choice></Option>
                        </Orientations>
                        <CheckLine><CheckBox type="checkbox" defaultChecked />Rotate 180 degrees</CheckLine>
                      </Fields>
                    </Section>
                  </div>
                  <Section>
                    <SectionTitle>Page Preview</SectionTitle>
                    <Summary>
                      <dt>Name:</dt><dd>Program Defined</dd>
                      <dt>Page:</dt><dd>57.1  x  31.7  (mm)</dd>
                      <dt>Label:</dt><dd>57.1  x  31.7  (mm)</dd>
                      <dt>Gap/Mark/Hole:</dt><dd>3.0  (mm)</dd>
                    </Summary>
                    <PreviewRow>
                      <Sheet />
                      <PrintDirection><DirectionArrow /><span>Printing Direction</span></PrintDirection>
                    </PreviewRow>
                  </Section>
                </Columns>
              </Content>
            </DialogMain>
            <DialogFooter>
              <PushButton $primary>OK</PushButton>
              <PushButton>Cancel</PushButton>
            </DialogFooter>
            <Callouts aria-hidden="true" fill="none" stroke="#d8303c">
              <path d="M70 85.500h18v-4l16 9.500-16 9.500v-4H70z" stroke="#d0202c" strokeWidth="1.600" />
              <path d="M120.500 108.500h17v-4l18 8-18 8v-4h-17z" strokeWidth=".8" />
              <path d="M121.500 128.500h16v-5l17 9.500-17 9.500v-5h-16z" strokeWidth=".8" />
              <path d="M80.500 271.500h9v-10l9 21.500-9 21.500v-10h-9z" strokeWidth=".8" />
              <path d="M292.500 271.500h-11v-11l-11 22 11 22v-10h11z" strokeWidth=".8" />
            </Callouts>
          </Dialog>
        </AppWindow>
      </Desktop>
    </>
  );
}
